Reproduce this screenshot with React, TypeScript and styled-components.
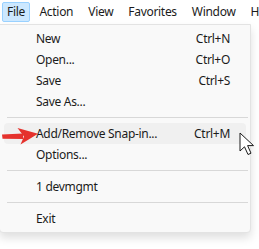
import React from "react";
import styled, { createGlobalStyle } from "styled-components";

const Global = createGlobalStyle`
  html, body { margin: 0; padding: 0; background: #ffffff; }
  body { font-family: "Segoe UI", "Noto Sans", "Open Sans", sans-serif; font-size: 12px; letter-spacing: -0.3px; color: #1b1b1b; overflow: hidden; }
`;

const Page = styled.div`
  position: relative;
  width: 259px;
  height: 249px;
  overflow: hidden;
  background: #ffffff;
`;

const MenuBar = styled.div`
  display: flex;
  align-items: center;
  height: 24px;
  padding-left: 2px;
  white-space: nowrap;
`;

const BarItem = styled.div<{ $active?: boolean }>`
  box-sizing: border-box;
  height: 20px;
  line-height: 18px;
  padding: 0 ${(p) => (p.$active ? "4px" : "6.5px")};
  margin-right: ${(p) => (p.$active ? "2px" : "0")};
  border: 1px solid ${(p) => (p.$active ? "#99d1ff" : "transparent")};
  background: ${(p) => (p.$active ? "#cce8ff" : "transparent")};
  border-radius: 2px;
`;

const Dropdown = styled.div`
  box-sizing: border-box;
  width: 252px;
  margin-left: -1px;
  padding: 3px 4px 3px 4px;
  background: #f9f9f9;
  border: 1px solid #e3e3e3;
  border-radius: 0 0 4px 4px;
  box-shadow: 0 5px 10px rgba(0, 0, 0, 0.13);
`;

const Item = styled.div<{ $hover?: boolean }>`
  display: flex;
  align-items: center;
  justify-content: space-between;
  height: 21px;
  padding: 0 16px 0 32px;
  border-radius: 4px;
  background: ${(p) => (p.$hover ? "#f0f0f0" : "transparent")};
`;

const Shortcut = styled.span`
  color: #1b1b1b;
`;

const Separator = styled.div`
  height: 1px;
  margin: 5px 0 5px 3px;
  width: 241px;
  background: #d8d8d8;
`;

const Overlay = styled.svg`
  position: absolute;
  pointer-events: none;
`;

const items: Array<{ label: string; key?: string; hover?: boolean } | "sep"> = [
  { label: "New", key: "Ctrl+N" },
  { label: "Open...", key: "Ctrl+O" },
  { label: "Save", key: "Ctrl+S" },
  { label: "Save As..." },
  "sep",
  { label: "Add/Remove Snap-in...", key: "Ctrl+M", hover: true },
  { label: "Options..." },
  "sep",
  { label: "1 devmgmt" },
  "sep",
  { label: "Exit" },
];

export default function App() {
  return (
    <Page>
      <Global />
      <MenuBar>
        <BarItem $active>File</BarItem>
        <BarItem>Action</BarItem>
        <BarItem>View</BarItem>
        <BarItem>Favorites</BarItem>
        <BarItem>Window</BarItem>
        <BarItem>Help</BarItem>
      </MenuBar>
      <Dropdown>
        {items.map((it, i) =>
          it === "sep" ? (
            <Separator key={i} />
          ) : (
            <Item key={i} $hover={it.hover}>
              <span>{it.label}</span>
              {it.key && <Shortcut>{it.key}</Shortcut>}
            </Item>
          )
        )}
      </Dropdown>
      <Overlay style={{ left: 0, top: 125 }} width="40" height="22" viewBox="0 0 40 22">
        <path d="M2 9.5 L23 8.5 L23 14 L2.5 13.8 Z" fill="#e5322d" />
        <path d="M17.5 3 L38 8.8 L20.5 19.5 L24 11.5 Z" fill="#e5322d" />
      </Overlay>
      <Overlay style={{ left: 238, top: 131 }} width="21" height="26" viewBox="0 0 21 26">
        <path
          d="M2 2 L2 20 L6.5 15.8 L10 23.5 L13 22.2 L9.6 14.6 L15.5 14.6 Z"
          fill="#ffffff"
          stroke="#1a1a1a"
          strokeWidth="1"
          strokeLinejoin="miter"
        />
      </Overlay>
    </Page>
  );
}
